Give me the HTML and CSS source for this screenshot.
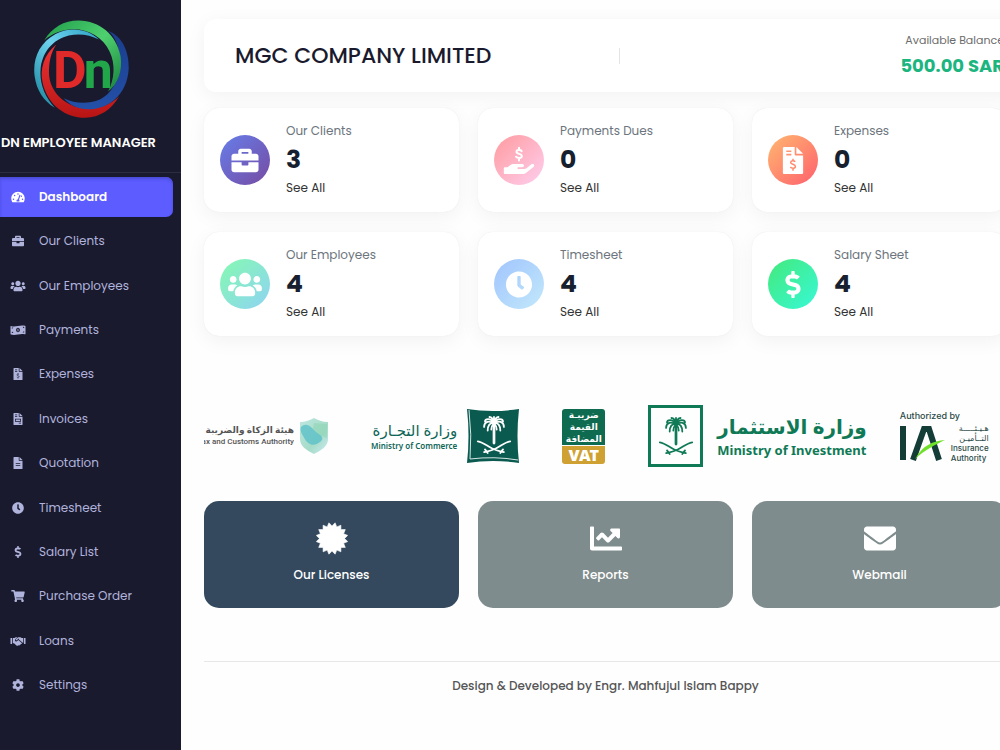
FILE: index.html
```html
<!DOCTYPE html>
<html lang="en">
<head>
    <meta charset="UTF-8">
    <meta name="viewport" content="width=device-width, initial-scale=1.0">
    <title>DN Employee Manager</title>
    <link rel="stylesheet" href="styles.css">
</head>
<body>
    <svg class="sprite" aria-hidden="true">
        <symbol id="gauge" viewBox="0 0 576 512"><path fill-rule="evenodd" d="M288 32C129 32 0 161 0 320c0 53 14 102 39 145 6 9 16 15 27 15h444c11 0 21-6 27-15 25-43 39-92 39-145C576 161 447 32 288 32zm0 64a32 32 0 1 1 0 64 32 32 0 0 1 0-64zM96 384a32 32 0 1 1 0-64 32 32 0 0 1 0 64zm48-160a32 32 0 1 1 0-64 32 32 0 0 1 0 64zm230-58c12 4 20 18 16 30l-58 178c12 12 20 28 20 42 0 12-3 22-9 32H233c-6-10-9-20-9-32 0-34 28-62 62-64l57-171c5-13 18-20 31-15zm26 42c8-30 64-20 64 16 0 28-32 40-52 26l-12-42zm80 176a32 32 0 1 1 0-64 32 32 0 0 1 0 64z"/></symbol>
        <symbol id="briefcase" viewBox="0 0 512 512"><path d="M320 336c0 8.84-7.16 16-16 16h-96c-8.84 0-16-7.16-16-16v-48H0v144c0 25.6 22.4 48 48 48h416c25.6 0 48-22.4 48-48V288H320v48zm144-208h-80V80c0-25.6-22.4-48-48-48H176c-25.6 0-48 22.4-48 48v48H48c-25.6 0-48 22.4-48 48v80h512v-80c0-25.6-22.4-48-48-48zm-144 0H192V96h128v32z"/></symbol>
        <symbol id="users" viewBox="0 0 640 512"><path d="M96 224c35.3 0 64-28.7 64-64s-28.7-64-64-64-64 28.7-64 64 28.7 64 64 64zm448 0c35.3 0 64-28.7 64-64s-28.7-64-64-64-64 28.7-64 64 28.7 64 64 64zm32 32h-64c-17.6 0-33.5 7.1-45.1 18.6 40.3 22.1 68.9 62 75.1 109.4h66c17.7 0 32-14.3 32-32v-32c0-35.3-28.7-64-64-64zm-256 0c61.9 0 112-50.1 112-112S381.9 32 320 32 208 82.1 208 144s50.1 112 112 112zm76.8 32h-8.3c-20.8 10-43.9 16-68.5 16s-47.6-6-68.5-16h-8.3C179.6 288 128 339.6 128 403.2V432c0 26.5 21.5 48 48 48h288c26.5 0 48-21.5 48-48v-28.8c0-63.6-51.6-115.2-115.2-115.2zm-223.7-13.4C161.5 263.1 145.6 256 128 256H64c-35.3 0-64 28.7-64 64v32c0 17.7 14.3 32 32 32h65.9c6.3-47.4 34.9-87.3 75.2-109.4z"/></symbol>
        <symbol id="money" viewBox="0 0 640 512"><path fill-rule="evenodd" d="M20 82c80 32 180 24 300 0 110-24 210-34 300-4 12 4 20 14 20 26v314c0 18-16 26-34 20-88-28-186-16-286 6-120 26-220 30-300 0-12-4-20-14-20-26V104c0-18 10-26 20-22zM320 160c-50 0-82 44-82 96s32 96 82 96 82-44 82-96-32-96-82-96zM56 146v56c34 0 60-24 60-52-20 0-40-1-60-4zm0 232c20 6 42 10 64 10 0-34-28-58-64-58v48zm470-258c0 32 26 56 58 58v-50c-18-5-38-8-58-8zm58 244v-56c-34 2-60 26-62 56 20-2 42-2 62 0z"/><path d="M306 206h30v80h14v24h-60v-24h14v-52h-14v-22z"/></symbol>
        <symbol id="file-dollar" viewBox="0 0 384 512"><path fill-rule="evenodd" d="M24 0h200v136c0 13 11 24 24 24h136v328c0 13-11 24-24 24H24c-13 0-24-11-24-24V24C0 11 11 0 24 0zm40 64v32h96V64H64zm0 64v32h96v-32H64z"/><path d="M256 0l128 128H256z"/><path class="cut" d="M192 222v36m0 160v32m42-170c-20-24-86-28-86 12 0 44 90 26 90 76 0 44-74 42-96 12"/></symbol>
        <symbol id="file-invoice" viewBox="0 0 384 512"><path fill-rule="evenodd" d="M24 0h200v136c0 13 11 24 24 24h136v328c0 13-11 24-24 24H24c-13 0-24-11-24-24V24C0 11 11 0 24 0zm40 64v32h96V64H64zm0 64v32h96v-32H64zm0 112v128h256V240H64zm32 32h192v64H96v-64zm128 144v32h96v-32h-96z"/><path d="M256 0l128 128H256z"/></symbol>
        <symbol id="file-lines" viewBox="0 0 384 512"><path fill-rule="evenodd" d="M24 0h200v136c0 13 11 24 24 24h136v328c0 13-11 24-24 24H24c-13 0-24-11-24-24V24C0 11 11 0 24 0zm72 256v36h192v-36H96zm0 80v36h192v-36H96z"/><path d="M256 0l128 128H256z"/></symbol>
        <symbol id="clock" viewBox="0 0 512 512"><path d="M256,8C119,8,8,119,8,256S119,504,256,504,504,393,504,256,393,8,256,8Zm92.49,313h0l-20,25a16,16,0,0,1-22.49,2.5h0l-67-49.72a40,40,0,0,1-15-31.23V112a16,16,0,0,1,16-16h32a16,16,0,0,1,16,16V256l58,42.5A16,16,0,0,1,348.49,321Z"/></symbol>
        <symbol id="dollar" viewBox="0 0 288 512"><path d="M209.2 233.4l-108-31.6C88.7 198.2 80 186.5 80 173.5c0-16.3 13.2-29.5 29.5-29.5h66.3c12.2 0 24.2 3.7 34.2 10.5 6.1 4.1 14.3 3.1 19.5-2l34.8-34c7.1-6.9 6.1-18.4-1.8-24.5C238 74.8 207.4 64.1 176 64V16c0-8.8-7.2-16-16-16h-32c-8.8 0-16 7.2-16 16v48h-2.5C45.8 64-5.4 118.7.5 183.6c4.2 46.1 39.4 83.6 83.8 96.6l102.5 30c12.5 3.7 21.2 15.3 21.2 28.3 0 16.3-13.2 29.5-29.5 29.5h-66.3C100 368 88 364.3 78 357.5c-6.1-4.1-14.3-3.1-19.5 2l-34.8 34c-7.1 6.9-6.1 18.4 1.8 24.5 24.5 19.2 55.1 29.9 86.5 30v48c0 8.8 7.2 16 16 16h32c8.8 0 16-7.2 16-16v-48.2c46.6-.9 90.3-28.6 105.7-72.7 21.5-61.6-14.6-124.8-72.5-141.7z"/></symbol>
        <symbol id="cart" viewBox="0 0 576 512"><path d="M528.12 301.319l47.273-208C578.806 78.301 567.391 64 551.99 64H159.208l-9.166-44.81C147.758 8.021 137.93 0 126.529 0H24C10.745 0 0 10.745 0 24v16c0 13.255 10.745 24 24 24h69.883l70.248 343.435C147.325 417.1 136 435.222 136 456c0 30.928 25.072 56 56 56s56-25.072 56-56c0-15.674-6.447-29.835-16.824-40h209.647C430.447 426.165 424 440.326 424 456c0 30.928 25.072 56 56 56s56-25.072 56-56c0-22.172-12.888-41.332-31.579-50.405l5.517-24.276c3.413-15.018-8.002-29.319-23.403-29.319H218.117l-6.545-32h293.145c11.206 0 20.92-7.754 23.403-18.681z"/></symbol>
        <symbol id="handshake" viewBox="0 0 640 512"><path d="M0 128h64v256H0zM576 128h64v256h-64zM96 128h70l60-32h70l-92 84c-24 24-20 62 6 82 24 18 58 16 78-6l44-40 148 122v46h-34l-8 26-34 8-26 26-36-8-30 20c-30 10-50-4-70-24l-94-84H96zM330 96h92l54 32h68v220l-20-20-170-140 16-16-22-24-80 72c-16 14-42 6-46-12-2-10 2-18 8-24z"/></symbol>
        <symbol id="gear" viewBox="0 0 512 512"><path d="M487.4 315.7l-42.6-24.6c4.3-23.2 4.3-47 0-70.2l42.6-24.6c4.9-2.8 7.1-8.6 5.5-14-11.1-35.6-30-67.8-54.7-94.6-3.8-4.1-10-5.1-14.8-2.3L380.8 110c-17.9-15.4-38.5-27.3-60.8-35.1V25.8c0-5.6-3.9-10.5-9.4-11.7-36.7-8.2-74.3-7.8-109.2 0-5.5 1.2-9.4 6.1-9.4 11.7V75c-22.2 7.9-42.8 19.8-60.8 35.1L88.7 85.5c-4.9-2.8-11-1.9-14.8 2.3-24.7 26.7-43.6 58.9-54.7 94.6-1.7 5.4.6 11.2 5.5 14L67.3 221c-4.3 23.2-4.3 47 0 70.2l-42.6 24.6c-4.9 2.8-7.1 8.6-5.5 14 11.1 35.6 30 67.8 54.7 94.6 3.8 4.1 10 5.1 14.8 2.3l42.6-24.6c17.9 15.4 38.5 27.3 60.8 35.1v49.2c0 5.6 3.9 10.5 9.4 11.7 36.7 8.2 74.3 7.8 109.2 0 5.5-1.2 9.4-6.1 9.4-11.7v-49.2c22.2-7.9 42.8-19.8 60.8-35.1l42.6 24.6c4.9 2.8 11 1.9 14.8-2.3 24.7-26.7 43.6-58.9 54.7-94.6 1.5-5.5-.7-11.3-5.6-14.1zM256 336c-44.1 0-80-35.9-80-80s35.9-80 80-80 80 35.9 80 80-35.9 80-80 80z"/></symbol>
        <symbol id="hand-dollar" viewBox="0 0 576 512"><path d="M566 328c-12-11-31-10-44 0l-92 74c-11 9-25 14-40 14H272c-9 0-16-7-16-16s7-16 16-16h78c16 0 31-11 33-27 4-20-12-37-31-37H192c-27 0-53 9-74 26l-46 38H16c-9 0-16 7-16 16v96c0 9 7 16 16 16h357c14 0 28-5 39-14l152-121c15-12 16-36 2-49z"/><path class="line" d="M288 14v34m0 174v32m50-176c-20-32-98-34-98 12 0 50 102 30 102 82 0 48-84 46-110 12"/></symbol>
        <symbol id="certificate" viewBox="0 0 32 32"><path stroke="currentColor" stroke-linejoin="round" stroke-width=".6" d="M28.6 16L31.7 19.1 27.6 20.8 29.3 24.9 24.9 24.9 24.9 29.3 20.8 27.6 19.1 31.7 16 28.6 12.9 31.7 11.2 27.6 7.1 29.3 7.1 24.9 2.7 24.9 4.4 20.8 .3 19.1 3.4 16 .3 12.9 4.4 11.2 2.7 7.1 7.1 7.1 7.1 2.7 11.2 4.4 12.9 .3 16 3.4 19.1 .3 20.8 4.4 24.9 2.7 24.9 7.1 29.3 7.1 27.6 11.2 31.7 12.9z"/></symbol>
        <symbol id="chart" viewBox="0 0 512 512"><path d="M496 384H64V80c0-8.84-7.16-16-16-16H16C7.16 64 0 71.16 0 80v336c0 17.67 14.33 32 32 32h464c8.84 0 16-7.16 16-16v-32c0-8.84-7.16-16-16-16zM464 96H345.94c-21.38 0-32.09 25.85-16.97 40.97l32.4 32.4L288 242.75l-73.37-73.37c-12.5-12.5-32.76-12.5-45.25 0l-68.69 68.69c-6.25 6.25-6.25 16.38 0 22.63l22.62 22.62c6.25 6.25 16.38 6.25 22.63 0L192 237.25l73.37 73.37c12.5 12.5 32.76 12.5 45.25 0l96-96 32.4 32.4c15.12 15.12 40.97 4.41 40.97-16.97V112c.01-8.84-7.15-16-15.99-16z"/></symbol>
        <symbol id="envelope" viewBox="0 0 512 512"><path d="M502.3 190.8c3.9-3.1 9.7-.2 9.7 4.7V400c0 26.5-21.5 48-48 48H48c-26.5 0-48-21.5-48-48V195.6c0-5 5.7-7.8 9.7-4.7 22.4 17.4 52.1 39.5 154.1 113.6 21.1 15.4 56.7 47.8 92.2 47.6 35.7.3 72-32.8 92.3-47.6 102-74.1 131.6-96.3 154-113.7zM256 320c23.2.4 56.6-29.2 73.4-41.4 132.7-96.3 142.8-104.7 173.4-128.7 5.8-4.5 9.2-11.5 9.2-18.9v-19c0-26.5-21.5-48-48-48H48c-26.5 0-48 21.5-48 48v19c0 7.4 3.4 14.3 9.2 18.9 30.6 23.9 40.7 32.4 173.4 128.7 16.8 12.2 50.2 41.8 73.4 41.4z"/></symbol>
        <!-- palm tree over crossed swords -->
        <symbol id="palm" viewBox="0 0 40 44">
            <g fill="none" stroke="currentColor" stroke-linecap="round">
                <path stroke-width="3" d="M20 12V31"/>
                <path stroke-width="2" d="M20 9C16 2 10 4 10 7M20 9C13 5 9 8 9 13M20 9C15 8 13 12 13 17M20 9C24 2 30 4 30 7M20 9C27 5 31 8 31 13M20 9C25 8 27 12 27 17M20 9C19 4 17 2 15 2M20 9C21 4 23 2 25 2M20 9V2M20 9C18 11 17 13 17 16M20 9C22 11 23 13 23 16"/>
                <path stroke-width="2" d="M2 29C8 30 12 34 18 37S27 40 31 41M38 29C32 30 28 34 22 37S13 40 9 41M27 42L30 38M13 42L10 38"/>
            </g>
        </symbol>
    </svg>

    <aside class="sidebar">
        <div class="brand">
            <svg class="brand-logo" viewBox="96 53 296 304" role="img" aria-label="DN">
                <defs>
                    <linearGradient id="green" x2="1" y2="1"><stop offset="0" stop-color="#1f9d4a"/><stop offset=".5" stop-color="#4fd070"/><stop offset="1" stop-color="#17803a"/></linearGradient>
                    <linearGradient id="cyan" x1="1" x2="0" y2="1"><stop offset="0" stop-color="#2b9fc2"/><stop offset=".45" stop-color="#6fd3f0"/><stop offset="1" stop-color="#137f95"/></linearGradient>
                    <linearGradient id="blue" x2="0" y2="1"><stop offset="0" stop-color="#1b3d8c"/><stop offset="1" stop-color="#2350a8"/></linearGradient>
                    <linearGradient id="red" x2="0" y2="1"><stop offset="0" stop-color="#ee3434"/><stop offset="1" stop-color="#b81414"/></linearGradient>
                </defs>
                <path fill="url(#red)" d="M167 130C130 160 115 205 126 250C142 315 195 354 255 354C300 352 335 330 359 288C325 322 278 332 232 322C185 308 147 270 145 220C144 185 150 155 167 130z"/>
                <path fill="url(#blue)" d="M325 88C370 105 390 155 388 205C383 285 325 328 265 328C232 327 208 315 190 294C225 312 265 312 300 298C345 275 362 225 360 165C356 130 346 106 325 88z"/>
                <path fill="url(#cyan)" d="M297 115C265 82 210 74 165 98C115 125 94 175 101 227C107 270 128 302 162 323C132 290 116 250 119 208C123 155 155 116 205 103C238 95 270 101 297 115z"/>
                <path fill="url(#green)" d="M130 118C155 78 190 57 235 57C300 58 350 100 363 165C370 210 355 250 325 274C345 235 348 190 330 152C310 108 265 84 220 84C185 85 155 96 130 118z"/>
                <text class="logo-letter" x="157" y="263" font-size="158" fill="#e02a2a">D</text>
                <text class="logo-letter" x="251" y="263" font-size="158" fill="#22a64a">n</text>
            </svg>
            <div class="brand-name">DN EMPLOYEE MANAGER</div>
        </div>
        <nav class="menu">
            <a class="active" href="#dashboard"><svg><use href="#gauge"/></svg>Dashboard</a>
            <a href="#clients"><svg><use href="#briefcase"/></svg>Our Clients</a>
            <a href="#employees"><svg><use href="#users"/></svg>Our Employees</a>
            <a href="#payments"><svg><use href="#money"/></svg>Payments</a>
            <a href="#expenses"><svg><use href="#file-dollar"/></svg>Expenses</a>
            <a href="#invoices"><svg><use href="#file-invoice"/></svg>Invoices</a>
            <a href="#quotation"><svg><use href="#file-lines"/></svg>Quotation</a>
            <a href="#timesheet"><svg><use href="#clock"/></svg>Timesheet</a>
            <a href="#salary"><svg><use href="#dollar"/></svg>Salary List</a>
            <a href="#purchase"><svg><use href="#cart"/></svg>Purchase Order</a>
            <a href="#loans"><svg><use href="#handshake"/></svg>Loans</a>
            <a href="#settings"><svg><use href="#gear"/></svg>Settings</a>
        </nav>
    </aside>

    <main class="content">
        <header class="topbar">
            <h1>MGC COMPANY LIMITED</h1>
            <div class="divider"></div>
            <div class="balance">
                <div class="balance-label">Available Balance</div>
                <div class="balance-value">500.00 SAR</div>
            </div>
        </header>

        <section class="cards">
            <div class="card">
                <div class="card-icon clients"><svg><use href="#briefcase"/></svg></div>
                <div class="card-text"><h2>Our Clients</h2><p class="count">3</p><a href="#clients">See All</a></div>
            </div>
            <div class="card">
                <div class="card-icon dues"><svg><use href="#hand-dollar"/></svg></div>
                <div class="card-text"><h2>Payments Dues</h2><p class="count">0</p><a href="#payments">See All</a></div>
            </div>
            <div class="card">
                <div class="card-icon expenses"><svg><use href="#file-dollar"/></svg></div>
                <div class="card-text"><h2>Expenses</h2><p class="count">0</p><a href="#expenses">See All</a></div>
            </div>
            <div class="card">
                <div class="card-icon employees"><svg><use href="#users"/></svg></div>
                <div class="card-text"><h2>Our Employees</h2><p class="count">4</p><a href="#employees">See All</a></div>
            </div>
            <div class="card">
                <div class="card-icon timesheet"><svg><use href="#clock"/></svg></div>
                <div class="card-text"><h2>Timesheet</h2><p class="count">4</p><a href="#timesheet">See All</a></div>
            </div>
            <div class="card">
                <div class="card-icon salary"><svg><use href="#dollar"/></svg></div>
                <div class="card-text"><h2>Salary Sheet</h2><p class="count">4</p><a href="#salary">See All</a></div>
            </div>
        </section>

        <section class="partners">
            <div class="partner tax">
                <div class="tax-text">
                    <span class="ar" lang="ar" dir="rtl">هيئة الزكاة والضريبة والجمارك</span>
                    <span>Tax and Customs Authority</span>
                </div>
                <svg class="shield" viewBox="0 0 28 36">
                    <defs><linearGradient id="mint" x2="1" y2="1"><stop offset="0" stop-color="#bfe6e0"/><stop offset=".6" stop-color="#a5dcc8"/><stop offset="1" stop-color="#cdeaf2"/></linearGradient></defs>
                    <path fill="url(#mint)" d="M0 4C6 4 10 2 14 0c4 2 8 4 14 4v17c0 7-6 11-14 15C6 32 0 28 0 21z"/>
                    <path fill="#8fd6b4" opacity=".6" d="M14 5l13 1v14l-9-3-5-7z"/>
                    <path fill="#5cc0c8" opacity=".8" d="M1 9C5 5 9 7 12 10S17 15 20 17 23 22 20 24 14 28 10 26 5 21 3 18 0 12 1 9z"/>
                </svg>
            </div>
            <div class="partner commerce">
                <div class="commerce-text">
                    <span class="ar" lang="ar" dir="rtl">وزارة التجـارة</span>
                    <span>Ministry of Commerce</span>
                </div>
                <svg class="commerce-mark" viewBox="0 0 52 54">
                    <path fill="#0a5a50" d="M0 0Q26 4 52 0Q49 27 52 54Q26 50 0 54Q3 27 0 0z"/>
                    <path fill="none" stroke="#d5e5e2" d="M2 1Q5 26 3 50Q27 47 51 51"/>
                    <use href="#palm" x="9" y="6" width="36" height="40" color="#fff"/>
                </svg>
            </div>
            <div class="partner vat">
                <div class="vat-top" lang="ar" dir="rtl"><span>ضريبـة</span><span>القيمة</span><span>المضافة</span></div>
                <div class="vat-bottom">VAT</div>
            </div>
            <div class="partner invest">
                <div class="invest-mark"><svg><use href="#palm"/></svg></div>
                <div class="invest-text">
                    <span class="ar" lang="ar" dir="rtl">وزارة الاستثمار</span>
                    <span>Ministry of Investment</span>
                </div>
            </div>
            <div class="partner insurance">
                <div class="authorized">Authorized by</div>
                <div class="insurance-row">
                    <svg class="ia-mark" viewBox="0 0 45 36" role="img" aria-label="IA">
                        <rect y="1" width="6" height="34" fill="#153d38"/>
                        <path fill="none" stroke="#153d38" stroke-width="6" d="M13 35L24 4H29L39 35"/>
                        <path fill="#6fe02a" d="M15 34C23 20 33 16 45 15C35 20 26 24 15 34z"/>
                    </svg>
                    <div class="insurance-text">
                        <span lang="ar" dir="rtl">هـيـئـــــة</span>
                        <span lang="ar" dir="rtl">التــأميـن</span>
                        <span>Insurance</span>
                        <span>Authority</span>
                    </div>
                </div>
            </div>
        </section>

        <section class="actions">
            <a class="action dark" href="#licenses"><svg><use href="#certificate"/></svg>Our Licenses</a>
            <a class="action" href="#reports"><svg><use href="#chart"/></svg>Reports</a>
            <a class="action" href="#webmail"><svg><use href="#envelope"/></svg>Webmail</a>
        </section>

        <footer>Design &amp; Developed by Engr. Mahfujul Islam Bappy</footer>
    </main>
</body>
</html>
```
FILE: styles.css
```css
* {
    box-sizing: border-box;
}
body {
    margin: 0;
    min-height: 100vh;
    display: flex;
    overflow: hidden;
    background: #fefefe;
    font-family: Poppins, Inter, sans-serif;
    font-size: 12px;
    color: #333;
}
a {
    text-decoration: none;
    color: inherit;
}
svg {
    fill: currentColor;
}
.sprite {
    position: absolute;
    width: 0;
    height: 0;
}
.line {
    fill: none;
    stroke: currentColor;
    stroke-width: 38;
    stroke-linecap: round;
}
.cut {
    fill: none;
    stroke: var(--cut, #1a1a2e);
    stroke-width: 28;
}

/* sidebar */
.sidebar {
    flex: none;
    width: 181px;
    min-height: 100vh;
    padding-bottom: 45px;
    display: flex;
    flex-direction: column;
    background: #1a1a2e;
}
.brand {
    height: 173px;
    padding-top: 19px;
    border-bottom: 1px solid #2d2d42;
}
.brand-logo {
    display: block;
    width: 97px;
    height: 100px;
    margin-left: 33px;
}
.logo-letter {
    font-family: Roboto, sans-serif;
    font-weight: 700;
}
.brand-name {
    margin-top: 14px;
    padding-left: 1px;
    line-height: 20px;
    font-size: 13px;
    font-weight: 600;
    color: #fff;
    white-space: nowrap;
}
.menu {
    flex: 1;
    padding-top: 4px;
    display: flex;
    flex-direction: column;
    justify-content: space-between;
}
.menu a {
    height: 40px;
    margin-right: 8px;
    padding-left: 10px;
    display: flex;
    align-items: center;
    gap: 13px;
    color: #b0b3dc;
}
.menu svg {
    width: 16px;
    height: 12px;
}
.menu a.active {
    background: #5c5cff;
    color: #fff;
    font-weight: 600;
    border-radius: 0 7px 7px 0;
    box-shadow: inset 0 2px 3px #4b4bd6;
}

/* the content runs a little past the right edge */
.content {
    flex: 1;
    margin-right: -7px;
    padding: 19px 0 0 23px;
}
.topbar {
    height: 73px;
    margin-right: -28px;
    padding: 0 31px;
    display: grid;
    grid-template-columns: 1fr auto 1fr;
    align-items: center;
    background: #fff;
    border-radius: 12px;
    box-shadow: 0 4px 20px rgba(0, 0, 0, 0.05);
}
.topbar h1 {
    margin: 0;
    font-size: 22px;
    font-weight: 500;
    color: #1a1a2e;
    white-space: nowrap;
}
.divider {
    width: 1px;
    height: 16px;
    background: #e4e4e8;
}
.balance {
    text-align: right;
    justify-self: end;
}
.balance-label {
    line-height: 20px;
    font-size: 11px;
    color: #6c6c6c;
}
.balance-value {
    line-height: 32px;
    font-size: 18px;
    font-weight: 700;
    color: #1bb580;
}
.cards, .actions {
    display: grid;
    grid-template-columns: repeat(3, 1fr);
    gap: 20px 19px;
}
.cards {
    margin-top: 16px;
}
.card {
    height: 104px;
    padding: 0 16px;
    display: flex;
    align-items: center;
    gap: 16px;
    background: #fff;
    border-radius: 15px;
    box-shadow: 0 5px 20px rgba(0, 0, 0, 0.05), 0 0 1px rgba(0, 0, 0, 0.1);
}
.card-text {
    padding-bottom: 2px;
}
.card h2 {
    margin: 0;
    line-height: 20px;
    font-size: 12px;
    font-weight: 400;
    color: #6c757d;
}
.card .count {
    margin: 0;
    line-height: 38px;
    font-size: 25px;
    font-weight: 700;
    color: #17202e;
}
.card a {
    display: block;
    line-height: 18px;
    color: #333;
}
.card-icon {
    flex: none;
    width: 50px;
    height: 50px;
    border-radius: 50%;
    display: flex;
    align-items: center;
    justify-content: center;
    color: #fff;
}
.card-icon svg {
    width: 34px;
    height: 27px;
}
.clients { background: linear-gradient(135deg, #667eea, #764ba2); }
.dues { background: linear-gradient(135deg, #ff9a9e, #fecfef); }
.expenses { background: linear-gradient(135deg, #ffb870, #ff5f6d); --cut: #ff8a6d; }
.employees { background: linear-gradient(135deg, #84fab0, #8fd3f4); }
.timesheet { background: linear-gradient(135deg, #a1c4fd, #c2e9fb); }
.salary { background: linear-gradient(135deg, #43e97b, #38f9d7); }

/* partner logos */
.partners {
    height: 62px;
    margin-top: 69px;
    padding-right: 16px;
    display: flex;
    align-items: center;
    gap: 43px;
}
.partner {
    flex: none;
    font-family: "Noto Sans", "DejaVu Sans", sans-serif;
    white-space: nowrap;
}
.partner span {
    display: block;
}
.tax, .commerce, .invest, .insurance-row {
    display: flex;
    align-items: center;
}
.tax {
    width: 124px;
    gap: 6px;
}
.tax-text {
    width: 90px;
    overflow: hidden;
    display: flex;
    flex-direction: column;
    align-items: flex-end;
    font-family: Roboto, "DejaVu Sans", sans-serif;
    line-height: 12px;
    font-size: 8px;
    font-weight: 500;
    color: #555;
}
.tax-text .ar {
    font-size: 9px;
    font-weight: 700;
}
.shield {
    width: 28px;
    height: 36px;
}
.commerce {
    gap: 10px;
    color: #0f6657;
}
.commerce-text {
    text-align: right;
    font-size: 8px;
    line-height: 12px;
    font-weight: 600;
}
.commerce-text .ar {
    font-size: 15px;
    line-height: 20px;
    font-weight: 400;
}
.commerce-mark {
    width: 52px;
    height: 54px;
}
.vat {
    width: 43px;
    text-align: center;
    color: #fff;
}
.vat-top {
    background: #0f6b50;
    border-radius: 3px 3px 0 0;
    font-size: 9px;
    line-height: 12px;
    font-weight: 700;
}
.vat-bottom {
    margin-top: 1px;
    background: #cfa032;
    border-radius: 0 0 3px 3px;
    font-size: 16px;
    line-height: 18px;
    font-weight: 900;
}
.invest {
    gap: 14px;
    color: #0f7a55;
}
.invest-mark {
    width: 55px;
    height: 62px;
    border: 3px solid #0f7a55;
    display: flex;
    align-items: center;
    justify-content: center;
}
.invest-mark svg {
    width: 36px;
    height: 40px;
}
.invest-text {
    font-size: 13px;
    line-height: 18px;
    font-weight: 700;
}
.invest-text .ar {
    font-size: 20px;
    line-height: 28px;
}
.insurance {
    margin-left: auto;
    font-family: Inter, "DejaVu Sans", sans-serif;
    color: #2b4a47;
}
/* sits closer to its neighbour than the other logos */
.invest + .insurance {
    margin-right: 0;
    margin-left: -10px;
}
.authorized {
    font-size: 9px;
    line-height: 14px;
    font-weight: 500;
}
.insurance-row {
    gap: 6px;
}
.ia-mark {
    width: 45px;
    height: 36px;
}
.insurance-text {
    font-size: 8px;
    line-height: 10px;
    font-weight: 500;
}

/* shortcut tiles */
.actions {
    margin-top: 34px;
}
.action {
    height: 107px;
    padding-top: 21px;
    display: flex;
    flex-direction: column;
    align-items: center;
    gap: 10px;
    background: #7f8c8d;
    border-radius: 15px;
    color: #fff;
    line-height: 20px;
    font-weight: 500;
}
.action.dark {
    background: #34495e;
}
.action svg {
    width: 32px;
    height: 33px;
}
footer {
    margin-top: 53px;
    padding-top: 14px;
    border-top: 1px solid #e8e8e8;
    text-align: center;
    line-height: 20px;
    font-weight: 500;
    color: #555;
}
```
